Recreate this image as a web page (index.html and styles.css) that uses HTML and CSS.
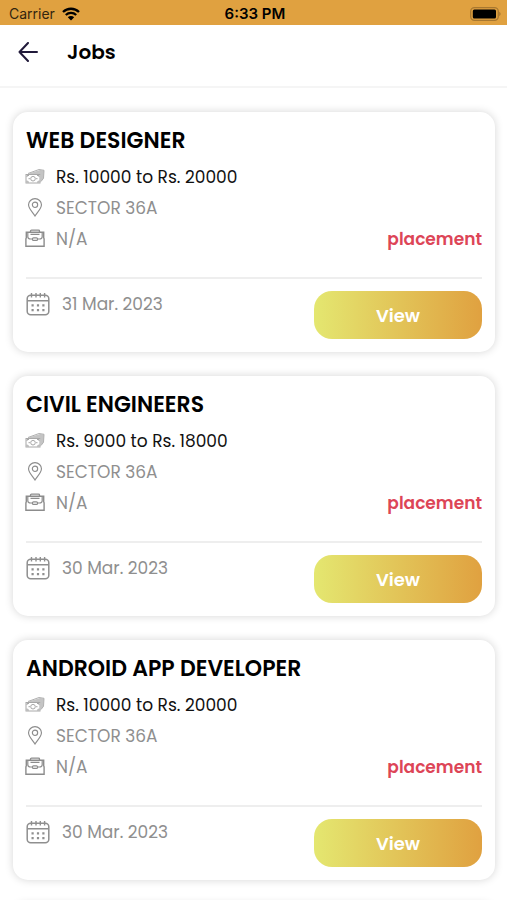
FILE: index.html
```html
<!DOCTYPE html>
<html lang="en">
<head>
<meta charset="utf-8">
<meta name="viewport" content="width=device-width, initial-scale=1">
<title>Jobs</title>
<link rel="stylesheet" href="styles.css">
</head>
<body>
<svg class="sprite" aria-hidden="true">
  <symbol id="cash" viewBox="0 0 20 16">
    <path d="M4 5 15 1.500l4 .5-.5 8-3 3.500V6H1.500Z" fill="#c4c4c4"/>
    <path d="M3 5 14 1l5 .8-.5 8L16 13" fill="none" stroke="#b0b0b0"/>
    <rect x="1" y="6" width="14" height="8.500" fill="#fff" stroke="#a8a8a8"/>
    <circle cx="8" cy="10.200" r="2.300" fill="none" stroke="#a8a8a8"/>
    <path d="M2 8.500V7h2M12 7h2v1.500M2 12v1.500h2M12 13.500h2V12M3.500 10.200h1.500M11 10.200h1.500" fill="none" stroke="#a8a8a8"/>
  </symbol>
  <symbol id="pin" viewBox="0 0 20 20">
    <path d="M10 19C8 15.500 3.200 11.500 3.200 7.200a6.800 6.500 0 0 1 13.600 0C16.800 11.500 12 15.500 10 19Z" fill="none" stroke="currentColor" stroke-width="1.200"/>
    <circle cx="10" cy="7.200" r="2.800" fill="none" stroke="currentColor" stroke-width="1.200"/>
  </symbol>
  <symbol id="case" viewBox="0 0 20 18">
    <path d="M1.300 2.800h17.400v5.500l.4 1v7.400H.9V9.300l.4-1Z" fill="none" stroke="currentColor" stroke-width="1.400"/>
    <path d="M5.500 2.800V1.500q0-.8 1-.8h7q1 0 1 .8v1.300" fill="none" stroke="currentColor" stroke-width="1.300"/>
    <path d="M2.800 3.500v3.700q0 2.200 2.700 2.300h2M17.200 3.500v3.700q0 2.200-2.700 2.300h-2M5.500 4.800h9" fill="none" stroke="currentColor" stroke-width="1.200"/>
    <rect x="7.500" y="8.300" width="5" height="2.600" rx="1" fill="none" stroke="currentColor" stroke-width="1.200"/>
  </symbol>
  <symbol id="calendar" viewBox="0 0 24 24">
    <rect x="1.200" y="3.300" width="21.600" height="19.500" rx="3.500" fill="none" stroke="currentColor" stroke-width="1.500"/>
    <path d="M1.500 8.800h21M5.500 1v4.500M10 1v4.500M14.300 1v4.500M18.600 1v4.500" fill="none" stroke="currentColor" stroke-width="1.400"/>
    <path d="M5.500 13.300h2.200M10.900 13.300h2.200M16.300 13.300h2.200M5.500 18.200h2.200M10.900 18.200h2.200M16.300 18.200h2.200" stroke="currentColor" stroke-width="2.200"/>
  </symbol>
</svg>

<div class="status">
  <div class="carrier">
    <span>Carrier</span>
    <svg class="wifi" viewBox="0 0 18 14" aria-hidden="true">
      <path d="M1 5a11.500 11.500 0 0 1 16 0M3.800 8a7.500 7.500 0 0 1 10.400 0" fill="none" stroke="#000" stroke-width="2.300"/>
      <path d="M9 13.500 5.800 10.300a4.600 4.600 0 0 1 6.400 0Z"/>
    </svg>
  </div>
  <time class="clock">6:33 PM</time>
  <svg class="battery" viewBox="0 0 31 14" aria-hidden="true">
    <rect x=".7" y=".7" width="27.600" height="12.600" rx="3.800" fill="none" stroke="#a87830" stroke-width="1.300"/>
    <rect x="2.800" y="2.500" width="23.200" height="9" rx="1.500"/>
    <path d="M29.200 4.800q3 2.200 0 4.400Z" fill="#a87830"/>
  </svg>
</div>

<header class="header">
  <button class="back" type="button" aria-label="Back">
    <svg viewBox="0 0 20 20" aria-hidden="true"><path d="M19 10H1.500M10 1 1.500 10l8.500 9" fill="none" stroke="#211a3a" stroke-width="2" stroke-linecap="round" stroke-linejoin="round"/></svg>
  </button>
  <h1>Jobs</h1>
</header>

<main class="jobs">
  <article class="card">
    <h2>WEB DESIGNER</h2>
    <div class="row salary"><svg class="icon"><use href="#cash"/></svg><span>Rs. 10000 to Rs. 20000</span></div>
    <div class="row"><svg class="icon"><use href="#pin"/></svg><span>SECTOR 36A</span></div>
    <div class="row"><svg class="icon"><use href="#case"/></svg><span>N/A</span><span class="tag">placement</span></div>
    <div class="footer">
      <div class="date"><svg class="calendar"><use href="#calendar"/></svg><time datetime="2023-03-31">31 Mar. 2023</time></div>
      <button class="view" type="button">View</button>
    </div>
  </article>

  <article class="card">
    <h2>CIVIL ENGINEERS</h2>
    <div class="row salary"><svg class="icon"><use href="#cash"/></svg><span>Rs. 9000 to Rs. 18000</span></div>
    <div class="row"><svg class="icon"><use href="#pin"/></svg><span>SECTOR 36A</span></div>
    <div class="row"><svg class="icon"><use href="#case"/></svg><span>N/A</span><span class="tag">placement</span></div>
    <div class="footer">
      <div class="date"><svg class="calendar"><use href="#calendar"/></svg><time datetime="2023-03-30">30 Mar. 2023</time></div>
      <button class="view" type="button">View</button>
    </div>
  </article>

  <article class="card">
    <h2>ANDROID APP DEVELOPER</h2>
    <div class="row salary"><svg class="icon"><use href="#cash"/></svg><span>Rs. 10000 to Rs. 20000</span></div>
    <div class="row"><svg class="icon"><use href="#pin"/></svg><span>SECTOR 36A</span></div>
    <div class="row"><svg class="icon"><use href="#case"/></svg><span>N/A</span><span class="tag">placement</span></div>
    <div class="footer">
      <div class="date"><svg class="calendar"><use href="#calendar"/></svg><time datetime="2023-03-30">30 Mar. 2023</time></div>
      <button class="view" type="button">View</button>
    </div>
  </article>

  <article class="card"></article>
</main>
</body>
</html>
```

FILE: styles.css
```css
* {
  box-sizing: border-box;
}

body {
  display: flex;
  flex-direction: column;
  height: 100vh;
  margin: 0;
  background: #fff;
  color: #000;
  font-family: Poppins, Inter, sans-serif;
  font-size: 17px;
}

.sprite {
  display: none;
}

.status {
  display: grid;
  grid-template-columns: 1fr auto 1fr;
  align-items: center;
  flex: none;
  height: 25px;
  padding: 2px 6px 0 9px;
  background: #e0a140;
  font-family: Inter, sans-serif;
  font-size: 14px;
}

.carrier {
  display: flex;
  align-items: center;
  gap: 7px;
  color: #33250f;
}

.wifi {
  width: 18px;
  height: 14px;
}

.clock {
  font-size: 15px;
  font-weight: 600;
}

.battery {
  justify-self: end;
  width: 31px;
  height: 14px;
}

.header {
  display: flex;
  align-items: center;
  flex: none;
  gap: 29px;
  height: 63px;
  padding: 0 18px 7px;
  border-bottom: 2px solid #f5f5f5;
}

.back {
  width: 20px;
  height: 20px;
  padding: 0;
  border: 0;
  background: none;
}

.back svg {
  display: block;
  width: 20px;
  height: 20px;
}

h1,
h2 {
  margin: 0;
  font-weight: 600;
  line-height: 32px;
}

h1 {
  font-size: 20px;
}

h2 {
  margin-bottom: 4px;
  font-size: 22px;
}

.jobs {
  display: flex;
  flex: 1;
  flex-direction: column;
  gap: 24px;
  min-height: 0;
  padding: 24px 12px 24px 13px;
  overflow-y: auto;
  scrollbar-width: none;
}

.card {
  flex: none;
  padding: 13px;
  border-radius: 15px;
  background: #fff;
  box-shadow: 0 0 9px rgba(0, 0, 0, 0.17);
}

.row {
  display: flex;
  align-items: center;
  gap: 11px;
  height: 31px;
  color: #8f8f8f;
}

.salary {
  color: #111;
}

.icon {
  width: 20px;
  height: 19px;
  margin-left: -1px;
  color: #8c8c8c;
}

.tag {
  margin-left: auto;
  color: #dd4557;
  font-weight: 600;
}

.footer {
  display: flex;
  align-items: flex-start;
  justify-content: space-between;
  margin-top: 23px;
  padding-top: 12px;
  border-top: 2px solid #eee;
}

.date {
  display: flex;
  align-items: center;
  gap: 12px;
  color: #8f8f8f;
}

.calendar {
  width: 24px;
  height: 24px;
}

.view {
  width: 168px;
  height: 48px;
  padding: 0;
  border: 0;
  border-radius: 18px;
  background: linear-gradient(90deg, #e4e770, #e0a140);
  color: #fff;
  font: inherit;
  font-size: 18px;
  font-weight: 600;
}
```
